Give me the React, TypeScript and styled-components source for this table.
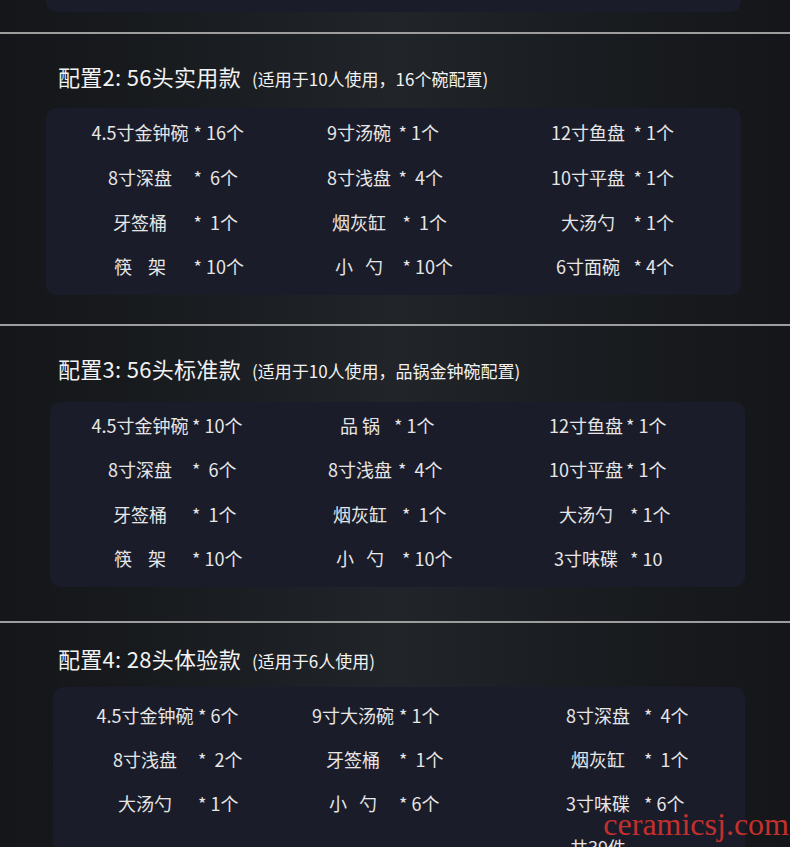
import styled, { createGlobalStyle } from "styled-components";

const Global = createGlobalStyle`
  html, body {
    margin: 0;
    padding: 0;
    background: #16181b;
  }
  body {
    font-family: "Noto Sans CJK SC", "Noto Sans", sans-serif;
  }
`

const Page = styled.div`
  position: relative;
  width: 790px;
  height: 847px;
  overflow: hidden;
  display: flex;
  flex-direction: column;
  background: linear-gradient(90deg, #141619 0%, #1b1e22 32%, #212428 50%, #1b1e22 68%, #141619 100%);
`

const Stub = styled.div`
  flex: 0 0 auto;
  height: 12px;
  margin: 0 49px 0 46px;
  background: #1b1c29;
  border-radius: 0 0 10px 10px;
`

const Divider = styled.div<{ $mt: number }>`
  flex: 0 0 auto;
  height: 2px;
  margin-top: ${p => p.$mt}px;
  background: #9d9d9d;
`

const Heading = styled.div<{ $mt: number }>`
  display: flex;
  align-items: baseline;
  height: 30px;
  line-height: 30px;
  margin-top: ${p => p.$mt}px;
  padding-left: 58px;
  color: #f2f2f2;
  white-space: nowrap;
`

const Title = styled.span`
  font-size: 22px;
  letter-spacing: 0.3px;
`

const Sub = styled.span`
  font-size: 17px;
  margin-left: 11px;
`

const Card = styled.div<{ $mt: number; $left: number; $right: number }>`
  flex: 0 0 auto;
  margin: ${p => p.$mt}px ${p => p.$right}px 0 ${p => p.$left}px;
  background: #1b1c29;
  border-radius: 10px;
`

const Grid = styled.div<{ $cols: string; $pl: number; $pt: number; $pb: number; $rowH: number }>`
  display: grid;
  grid-template-columns: ${p => p.$cols};
  grid-auto-rows: ${p => p.$rowH}px;
  align-items: center;
  padding: ${p => p.$pt}px 0 ${p => p.$pb}px ${p => p.$pl}px;
  font-size: 18px;
  line-height: 1;
  color: #e6e6e6;
`

const Label = styled.span`
  text-align: center;
  white-space: pre;
`

const Qty = styled.span`
  text-align: left;
  white-space: pre;
`

const Watermark = styled.div`
  position: absolute;
  top: 808px;
  right: 1px;
  font-family: "Liberation Serif", serif;
  font-size: 32px;
  line-height: 1;
  color: #c4302d;
`

type Item = [string, string]

const set2: Item[][] = [
  [["4.5寸金钟碗", "* 16个"], ["9寸汤碗", "* 1个"], ["12寸鱼盘", "* 1个"]],
  [["8寸深盘", "*  6个"], ["8寸浅盘", "*  4个"], ["10寸平盘", "* 1个"]],
  [["牙签桶", "*  1个"], ["烟灰缸", " *  1个"], ["大汤勺", "* 1个"]],
  [["筷    架", "* 10个"], ["小   勺", " * 10个"], ["6寸面碗", "* 4个"]],
]

const set3: Item[][] = [
  [["4.5寸金钟碗", "* 10个"], ["品 锅", "* 1个"], ["12寸鱼盘", "* 1个"]],
  [["8寸深盘", "*  6个"], ["8寸浅盘", " *  4个"], ["10寸平盘", "* 1个"]],
  [["牙签桶", "*  1个"], ["烟灰缸", "  *  1个"], ["大汤勺", " * 1个"]],
  [["筷    架", "* 10个"], ["小   勺", "  * 10个"], ["3寸味碟", " * 10"]],
]

const set4: Item[][] = [
  [["4.5寸金钟碗", "* 6个"], ["9寸大汤碗", "* 1个"], ["8寸深盘", "*  4个"]],
  [["8寸浅盘", "*  2个"], ["牙签桶", "*  1个"], ["烟灰缸", "*  1个"]],
  [["大汤勺", "* 1个"], ["小   勺", "* 6个"], ["3寸味碟", "* 6个"]],
  [["", ""], ["", ""], ["共39件", ""]],
]

const Items = ({ rows }: { rows: Item[][] }) => (
  <>
    {rows.map((row, i) =>
      row.map(([label, qty], j) => [
        <Label key={`l${i}-${j}`}>{label}</Label>,
        <Qty key={`q${i}-${j}`}>{qty}</Qty>,
      ])
    )}
  </>
)

export default function App() {
  return (
    <Page>
      <Global />
      <Stub />

      <Divider $mt={20} />
      <Heading $mt={27}>
        <Title>配置2: 56头实用款</Title>
        <Sub>(适用于10人使用，16个碗配置)</Sub>
      </Heading>
      <Card $mt={17} $left={46} $right={49}>
        <Grid $cols="107px 126px 79px 144px 91px 1fr" $pl={40.5} $pt={2} $pb={6.2} $rowH={44.7}>
          <Items rows={set2} />
        </Grid>
      </Card>

      <Divider $mt={29} />
      <Heading $mt={27}>
        <Title>配置3: 56头标准款</Title>
        <Sub>(适用于10人使用，品锅金钟碗配置)</Sub>
      </Heading>
      <Card $mt={19} $left={50} $right={45}>
        <Grid $cols="104px 134px 68px 152px 80px 1fr" $pl={38} $pt={1} $pb={6.8} $rowH={44.3}>
          <Items rows={set3} />
        </Grid>
      </Card>

      <Divider $mt={34} />
      <Heading $mt={20}>
        <Title>配置4: 28头体验款</Title>
        <Sub>(适用于6人使用)</Sub>
      </Heading>
      <Card $mt={14} $left={53} $right={45}>
        <Grid $cols="106px 109px 92px 153px 92px 1fr" $pl={39} $pt={6} $pb={11} $rowH={44}>
          <Items rows={set4} />
        </Grid>
      </Card>

      <Watermark>ceramicsj.com</Watermark>
    </Page>
  )
}
